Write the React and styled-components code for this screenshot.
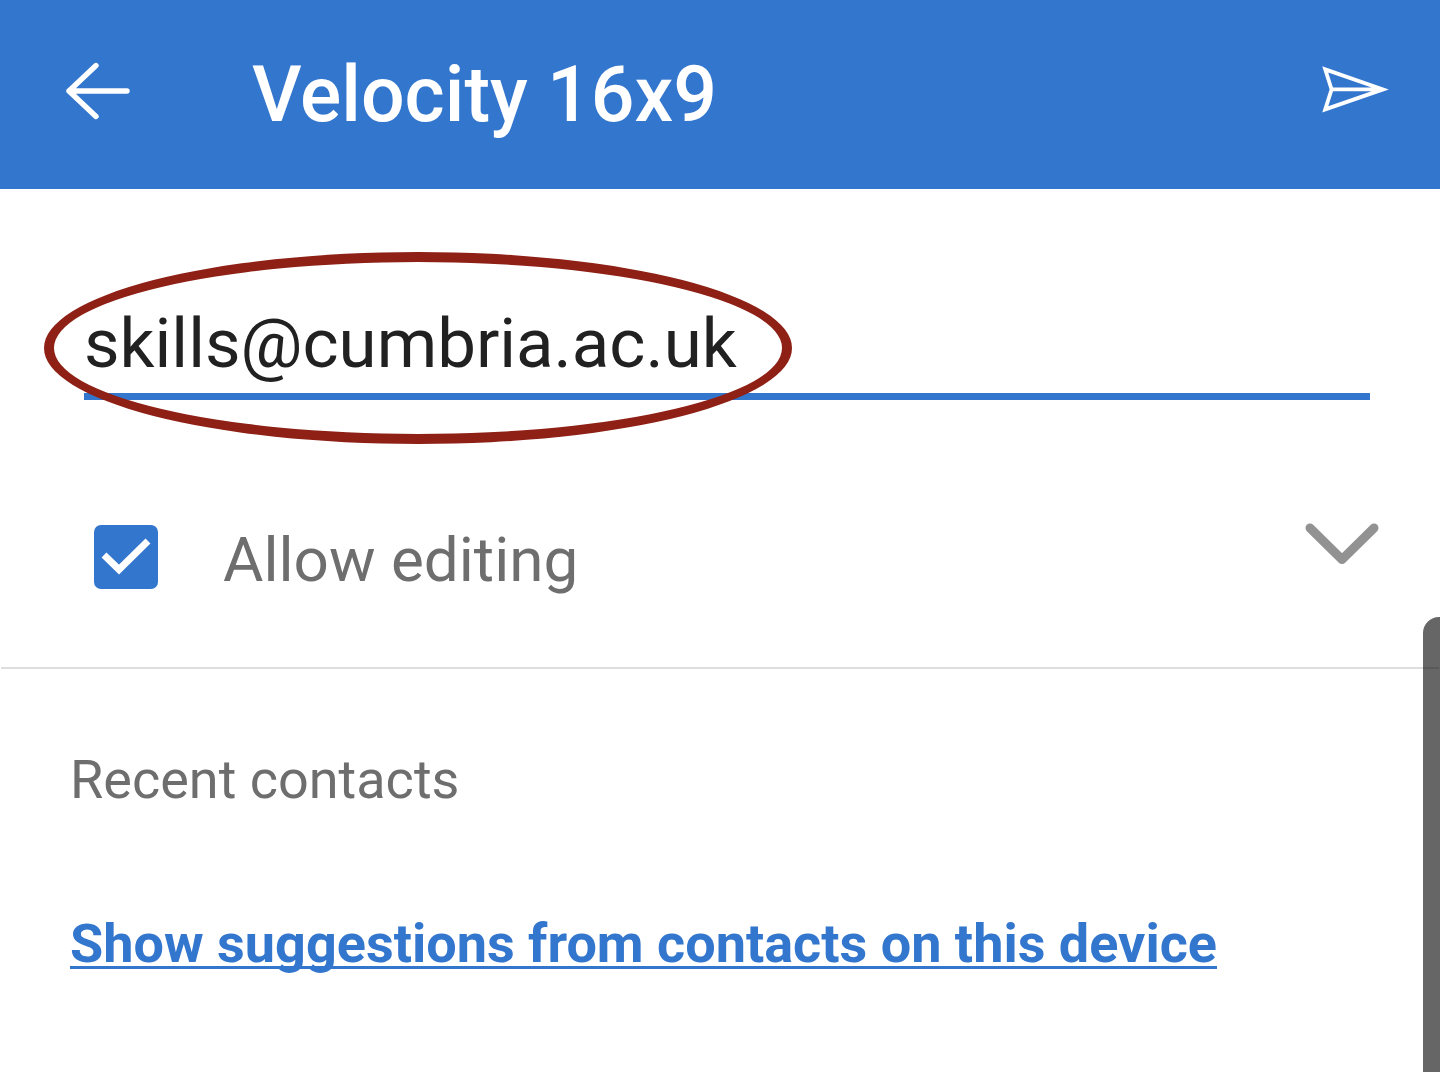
import { useState } from "react";
import styled, { createGlobalStyle } from "styled-components";

const App = () => {
  const [email, setEmail] = useState("skills@cumbria.ac.uk");
  const [canEdit, setCanEdit] = useState(true);

  return (
    <>
      <GlobalStyle />
      <Page>
        <Header>
          <IconButton type="button" aria-label="Back">
            <svg width="66" height="60" viewBox="0 0 66 60" fill="none">
              <path
                d="M32 5.5L5 31L32 56.5M5 31H63"
                stroke="white"
                strokeWidth="5.4"
                strokeLinecap="round"
                strokeLinejoin="round"
              />
            </svg>
          </IconButton>
          <Title>Velocity 16x9</Title>
          <IconButton type="button" aria-label="Send">
            <svg width="68" height="56" viewBox="0 0 68 56" fill="none">
              <path
                d="M3.2 7.4L61 27.4L3.2 47.4L9.6 27.4ZM9.6 27.4H61"
                stroke="white"
                strokeWidth="3.8"
                strokeMiterlimit="10"
              />
            </svg>
          </IconButton>
        </Header>
        <main>
          <Field>
            <EmailInput
              type="text"
              aria-label="Email address"
              spellCheck={false}
              value={email}
              onChange={(e) => setEmail(e.target.value)}
            />
          </Field>
          <OptionRow>
            <CheckLabel>
              <CheckBox>
                <input
                  type="checkbox"
                  checked={canEdit}
                  onChange={(e) => setCanEdit(e.target.checked)}
                />
                {canEdit && (
                  <svg viewBox="0 0 64 64" fill="none">
                    <path d="M10 30L25 44.5L54 16" stroke="white" strokeWidth="7" />
                  </svg>
                )}
              </CheckBox>
              <span>Allow editing</span>
            </CheckLabel>
            <IconButton type="button" aria-label="More options">
              <svg width="76" height="48" viewBox="0 0 76 48" fill="none">
                <path
                  d="M7 8L39 39.5L71 8"
                  stroke="#929292"
                  strokeWidth="9"
                  strokeLinecap="round"
                  strokeLinejoin="round"
                />
              </svg>
            </IconButton>
          </OptionRow>
          <Contacts>
            <h2>Recent contacts</h2>
            <a href="#contacts">Show suggestions from contacts on this device</a>
          </Contacts>
        </main>
        <ScrollThumb />
      </Page>
    </>
  );
};

export default App;

const GlobalStyle = createGlobalStyle`
  *,
  *::after {
    box-sizing: border-box;
  }

  body {
    margin: 0;
    background: #ffffff;
    font-family: Roboto, "Liberation Sans", sans-serif;
  }
`;

const Page = styled.div`
  position: relative;
  min-height: 100vh;
  overflow: hidden;
`;

const Header = styled.header`
  display: flex;
  align-items: center;
  height: 189px;
  padding: 0 50px 0 64px;
  background: #3376cd;

  /* icons sit a bit above the title's middle */
  button {
    padding-bottom: 10px;
  }
`;

const Title = styled.h1`
  flex: 1;
  margin: 0 0 0 122px;
  color: white;
  font-size: 77px;
  font-weight: 500;
  line-height: 90px;
`;

const IconButton = styled.button`
  flex: none;
  padding: 0;
  border: none;
  background: transparent;
  cursor: pointer;

  svg {
    display: block;
  }
`;

const Field = styled.div`
  position: relative;
  margin: 104px 70px 0 84px;

  /* marker ring around the address */
  &::after {
    content: "";
    position: absolute;
    top: -41px;
    left: -40px;
    width: 748px;
    height: 192px;
    border: 10px solid #8e2016;
    border-radius: 50%;
    pointer-events: none;
  }
`;

const EmailInput = styled.input`
  display: block;
  width: 100%;
  height: 107px;
  padding: 0;
  border: none;
  border-bottom: 7px solid #3376cd;
  outline: none;
  background: transparent;
  color: #212121;
  font-family: inherit;
  font-size: 69px;
`;

const OptionRow = styled.div`
  display: flex;
  align-items: flex-start;
  justify-content: space-between;
  margin: 0 1px;
  padding: 120px 60px 67px 93px;
  border-bottom: 2px solid #dedede;
`;

const CheckLabel = styled.label`
  display: flex;
  align-items: flex-start;
  gap: 65px;
  color: #6e6e6e;
  font-size: 62px;
  line-height: 80px;
`;

const CheckBox = styled.span`
  position: relative;
  width: 64px;
  height: 64px;
  margin-top: 5px;

  input {
    display: block;
    appearance: none;
    width: 100%;
    height: 100%;
    margin: 0;
    border: 6px solid #3376cd;
    border-radius: 7px;
  }

  input:checked {
    background: #3376cd;
  }

  svg {
    position: absolute;
    inset: 0;
    pointer-events: none;
  }
`;

const Contacts = styled.section`
  display: flex;
  flex-direction: column;
  align-items: flex-start;
  gap: 84px;
  padding: 71px 70px 60px;
  font-size: 54px;
  line-height: 80px;

  h2 {
    margin: 0;
    color: #6e6e6e;
    font-size: inherit;
    font-weight: 400;
  }

  a {
    color: #3376cd;
    font-weight: 700;
    text-decoration-thickness: 3px;
    text-decoration-skip-ink: none;
    text-underline-offset: 4px;
  }
`;

const ScrollThumb = styled.div`
  position: absolute;
  top: 617px;
  right: 0;
  bottom: 0;
  width: 17px;
  border-top-left-radius: 16px;
  background: rgba(0, 0, 0, 0.6);
`;
